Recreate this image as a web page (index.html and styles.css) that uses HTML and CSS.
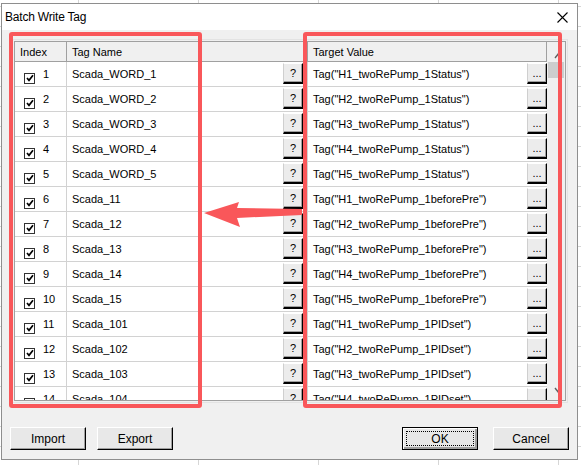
FILE: index.html
```html
<!DOCTYPE html>
<html lang="en">
<head>
    <meta charset="UTF-8">
    <title>Batch Write Tag</title>
    <link rel="stylesheet" href="styles.css">
</head>
<body>
    <div class="dialog">
        <div class="title-bar">
            <span class="title">Batch Write Tag</span>
            <svg class="close-btn" width="11" height="11" viewBox="0 0 11 11">
                <path d="M0.5 0.5 L10.5 10.5 M10.5 0.5 L0.5 10.5" stroke="#000" stroke-width="1.1" fill="none"/>
            </svg>
        </div>

        <div class="client">
            <div class="grid-frame">
                <div class="grid-main">
                    <div class="grid-header">
                        <div class="hcell col-index">Index</div>
                        <div class="hcell col-name">Tag Name</div>
                        <div class="hcell col-value">Target Value</div>
                    </div>
                    <div class="grid-body" id="gridBody">
                        <!-- rows are built by the script below -->
                    </div>
                </div>
                <div class="vscroll">
                    <svg class="scroll-arrow" width="8" height="8" viewBox="0 0 8 8">
                        <path d="M1 7 L5 2" stroke="#606060" stroke-width="1.4" fill="none"/>
                    </svg>
                    <div class="scroll-thumb"></div>
                    <svg class="scroll-arrow bottom" width="8" height="8" viewBox="0 0 8 8">
                        <path d="M1 1 L5 6" stroke="#606060" stroke-width="1.4" fill="none"/>
                    </svg>
                </div>
            </div>

            <div class="button-bar">
                <button class="dlg-btn">Import</button>
                <button class="dlg-btn gap-small">Export</button>
                <button class="dlg-btn default push-right"><span class="focus">OK</span></button>
                <button class="dlg-btn gap-wide">Cancel</button>
            </div>
        </div>
    </div>

    <!-- annotation marks -->
    <div class="mark mark-left"></div>
    <div class="mark mark-right"></div>
    <svg class="mark-arrow" width="110" height="34" viewBox="0 0 110 34">
        <polygon points="2,12 37,1 35,7 100,8 100,14 35,17 38,26" fill="#f9575a"/>
    </svg>

    <script>
        const tags = [
            ['Scada_WORD_1', 'H1_twoRePump_1Status'],
            ['Scada_WORD_2', 'H2_twoRePump_1Status'],
            ['Scada_WORD_3', 'H3_twoRePump_1Status'],
            ['Scada_WORD_4', 'H4_twoRePump_1Status'],
            ['Scada_WORD_5', 'H5_twoRePump_1Status'],
            ['Scada_11', 'H1_twoRePump_1beforePre'],
            ['Scada_12', 'H2_twoRePump_1beforePre'],
            ['Scada_13', 'H3_twoRePump_1beforePre'],
            ['Scada_14', 'H4_twoRePump_1beforePre'],
            ['Scada_15', 'H5_twoRePump_1beforePre'],
            ['Scada_101', 'H1_twoRePump_1PIDset'],
            ['Scada_102', 'H2_twoRePump_1PIDset'],
            ['Scada_103', 'H3_twoRePump_1PIDset'],
            ['Scada_104', 'H4_twoRePump_1PIDset']
        ];

        const checkSvg = '<svg width="8" height="8" viewBox="0 0 8 8"><path d="M1 4 L3 6.3 L7 1.3" stroke="#000" stroke-width="1.7" fill="none"/></svg>';

        function renderRows() {
            const body = document.getElementById('gridBody');
            tags.forEach((t, i) => {
                const row = document.createElement('div');
                row.className = 'grid-row';
                row.innerHTML = `
                    <div class="cell col-index"><span class="check">${checkSvg}</span><span>${i + 1}</span></div>
                    <div class="cell col-name"><span class="cell-text">${t[0]}</span><span class="cell-btn">?</span></div>
                    <div class="cell col-value"><span class="cell-text">Tag("${t[1]}")</span><span class="cell-btn dots">...</span></div>
                `;
                body.appendChild(row);
            });
        }

        renderRows();
    </script>
</body>
</html>
```

FILE: styles.css
```css
body {
    margin: 0;
    height: 465px;
    overflow: hidden;
    background-color: #fff;
    background-image:
        linear-gradient(to right, #d6d6d6 1px, transparent 1px),
        linear-gradient(to bottom, #d6d6d6 1px, transparent 1px);
    background-size: 120px 20px;
    background-position: 78px 0, 0 6px;
    font-family: "Liberation Sans", Arial, sans-serif;
    font-size: 11px;
    color: #000;
}
.dialog {
    box-sizing: border-box;
    width: 577px;
    height: 457px;
    margin: 3px 0 0 1px;
    border: 1px solid #8e8e8e;
    background-color: #f0f0f0;
    display: flex;
    flex-direction: column;
}
.title-bar {
    height: 26px;
    background-color: #fff;
    display: flex;
    align-items: center;
    padding-left: 3px;
    flex-shrink: 0;
}
.title {
    font-size: 12px;
    letter-spacing: -0.2px;
}
.close-btn {
    margin-left: auto;
    margin-right: 9px;
    margin-top: 1px;
}
.client {
    flex: 1;
    padding: 11px 0 0 12px;
}
.grid-frame {
    box-sizing: border-box;
    width: 552px;
    height: 360px;
    border: 1px solid #a0a0a0;
    outline: 1px solid #e3e3e3;
    outline-offset: 1px;
    display: flex;
    background-color: #fff;
}
.grid-main {
    width: 532px;
    display: flex;
    flex-direction: column;
}
.grid-header {
    height: 20px;
    display: flex;
    background-color: #f0f0f0;
    box-sizing: border-box;
    border-bottom: 1px solid #a0a0a0;
}
.hcell {
    box-sizing: border-box;
    border-right: 1px solid #a0a0a0;
    padding-left: 5px;
    display: flex;
    align-items: center;
}
.grid-body {
    flex: 1;
    overflow: hidden;
}
.grid-row {
    height: 25px;
    box-sizing: border-box;
    border-bottom: 1px solid #d2d2d2;
    display: flex;
}
.cell {
    box-sizing: border-box;
    border-right: 1px solid #d2d2d2;
    display: flex;
    align-items: center;
    height: 100%;
}
.col-index {
    width: 52px;
}
.col-name {
    width: 241px;
}
.col-value {
    width: 239px;
}
.grid-row .col-index {
    padding-left: 9px;
}
.grid-row .col-name,
.grid-row .col-value {
    padding-left: 5px;
    align-items: flex-start;
}
.grid-row .col-value {
    border-right: none;
}
.cell-text {
    flex: 1;
    line-height: 24px;
}
.check {
    box-sizing: border-box;
    width: 11px;
    height: 11px;
    margin: 8px 8px 0 0;
    border: 1px solid #333;
    background-color: #fff;
    display: flex;
    align-items: center;
    justify-content: center;
}
.cell-btn {
    box-sizing: border-box;
    width: 20px;
    height: 21px;
    margin: 1px 4px 0 0;
    background-color: #ececec;
    border-top: 1px solid #fff;
    border-left: 1px solid #cfcfcf;
    border-right: 1px solid #000;
    border-bottom: 2px solid #000;
    box-shadow: inset -1px -1px 0 #a0a0a0;
    display: flex;
    align-items: center;
    justify-content: center;
    font-size: 11px;
}
.cell-btn.dots {
    margin-right: 0;
    align-items: flex-end;
    padding-bottom: 3px;
}
.vscroll {
    width: 18px;
    background-color: #f0f0f0;
    display: flex;
    flex-direction: column;
    align-items: center;
}
.scroll-arrow {
    margin-top: 9px;
    margin-left: 4px;
    height: 8px;
}
.scroll-arrow.bottom {
    margin-top: auto;
    margin-bottom: 5px;
}
.scroll-thumb {
    width: 16px;
    height: 16px;
    margin-top: 3px;
    background-color: #cdcdcd;
}
.button-bar {
    display: flex;
    margin-top: 26px;
    margin-left: -4px;
    padding-right: 8px;
}
.dlg-btn {
    box-sizing: border-box;
    width: 76px;
    height: 23px;
    padding: 0;
    background-color: #e8e8e8;
    border-top: 1px solid #fff;
    border-left: 1px solid #fff;
    border-right: 1px solid #000;
    border-bottom: 1px solid #000;
    box-shadow: inset -1px -1px 0 #a0a0a0;
    font-family: "Liberation Sans", Arial, sans-serif;
    font-size: 12px;
    color: #000;
}
.gap-small {
    margin-left: 11px;
}
.gap-wide {
    margin-left: 15px;
}
.push-right {
    margin-left: auto;
}
.dlg-btn.default {
    border: 1px solid #000;
    box-shadow: inset 1px 1px 0 #fff, inset -2px -2px 0 #a0a0a0;
    display: flex;
    padding: 3px;
}
.focus {
    flex: 1;
    border: 1px dotted #000;
    display: flex;
    align-items: center;
    justify-content: center;
}
.mark {
    position: absolute;
    top: 32px;
    height: 376px;
    box-sizing: border-box;
    border: 4.5px solid #f9575a;
    border-radius: 3px;
}
.mark-left {
    left: 9px;
    width: 193px;
}
.mark-right {
    left: 303px;
    width: 259px;
}
.mark-arrow {
    position: absolute;
    left: 202px;
    top: 201px;
}
```
